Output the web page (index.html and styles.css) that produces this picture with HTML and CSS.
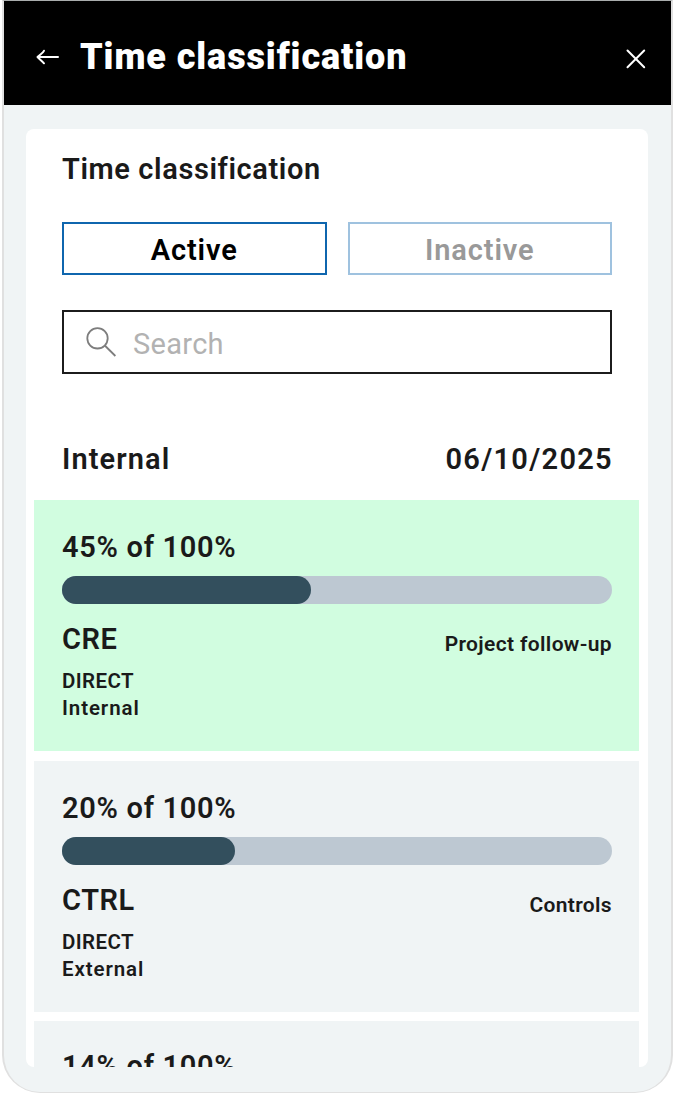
FILE: index.html
```html
<!DOCTYPE html>
<html lang="en">
<head>
    <meta charset="UTF-8">
    <meta name="viewport" content="width=device-width, initial-scale=1.0">
    <title>Time classification</title>
    <link rel="stylesheet" href="styles.css">
</head>
<body>
    <div class="phone">
        <!-- Header -->
        <header class="topbar">
            <svg class="back-icon" width="24" height="18" viewBox="0 0 24 18" fill="none" stroke="#fff" stroke-width="2" stroke-linecap="round" stroke-linejoin="round">
                <path d="M22 9H1.5M8 2.7C7.5 4.5 4 6.5 1.5 9C4 11.5 6 13 8 15.3"/>
            </svg>
            <h1>Time classification</h1>
            <svg class="close-icon" width="20" height="20" viewBox="0 0 20 20" fill="none" stroke="#fff" stroke-width="2" stroke-linecap="round">
                <path d="M1.5 1.5L18.2 18.2M18.2 1.5L1.5 18.2"/>
            </svg>
        </header>

        <main class="card">
            <h2>Time classification</h2>

            <div class="tabs">
                <button class="tab">Active</button>
                <button class="tab inactive">Inactive</button>
            </div>

            <div class="search">
                <svg width="32" height="32" viewBox="0 0 32 32" fill="none" stroke="#7d7d7d" stroke-width="1.8">
                    <circle cx="11.5" cy="12.3" r="10.2"/>
                    <path d="M18.8 19.5L29.4 30"/>
                </svg>
                <span class="search-text">Search</span>
            </div>

            <div class="group">
                <span class="group-name">Internal</span>
                <span class="date">06/10/2025</span>
            </div>

            <!-- Time entries -->
            <div class="entries">
                <section class="entry selected">
                    <p class="percent">45% of 100%</p>
                    <div class="bar"><div class="fill" style="width: 45.2%"></div></div>
                    <div class="row">
                        <span class="code">CRE</span>
                        <span class="desc">Project follow-up</span>
                    </div>
                    <p class="type">DIRECT</p>
                    <p class="scope">Internal</p>
                </section>
                <section class="entry">
                    <p class="percent">20% of 100%</p>
                    <div class="bar"><div class="fill" style="width: 31.5%"></div></div>
                    <div class="row">
                        <span class="code">CTRL</span>
                        <span class="desc">Controls</span>
                    </div>
                    <p class="type">DIRECT</p>
                    <p class="scope">External</p>
                </section>
                <section class="entry last">
                    <p class="percent">14% of 100%</p>
                </section>
            </div>
        </main>
    </div>
</body>
</html>
```
FILE: styles.css
```css
* {
    box-sizing: border-box;
}
body {
    font-family: Roboto, sans-serif;
    background-color: white;
    margin: 0;
    color: #1a1a1a;
}
h1, h2, p {
    margin: 0;
}
.phone {
    width: 671px;
    height: 1093px;
    margin-left: 2px;
    border: 2px solid #e0e0e0;
    border-top: 1px solid #a9adad;
    border-bottom-width: 1px;
    border-radius: 0 0 38px 38px;
    background-color: #f0f4f5;
    overflow: hidden;
}
.topbar {
    display: flex;
    align-items: center;
    height: 104px;
    padding: 7px 25px 0 32px;
    background-color: black;
    color: white;
}
.topbar h1 {
    flex: 1;
    margin-left: 20px;
    font-size: 36px;
    line-height: 42px;
    font-weight: 900;
    letter-spacing: 0.9px;
}
.back-icon {
    margin-top: 1px;
}
.close-icon {
    margin-top: 5px;
}
.card {
    width: 622px;
    height: 938px;
    margin: 24px 0 0 22px;
    padding: 22px 9px 0 8px;
    border-radius: 8px;
    background-color: white;
    overflow: hidden;
}
.card h2, .tabs, .search, .group {
    margin-left: 28px;
    margin-right: 27px;
}
.card h2, .group, .percent, .code {
    font-size: 29px;
    line-height: 36px;
    font-weight: 600;
    letter-spacing: 0.6px;
}
.tabs {
    display: flex;
    gap: 21px;
    margin-top: 35px;
}
.tab {
    flex: 1;
    height: 53px;
    padding: 3px 0 0;
    border: 2px solid #0f66ae;
    background-color: white;
    color: black;
    font-family: inherit;
    font-size: 29px;
    line-height: 36px;
    font-weight: 600;
    letter-spacing: 0.9px;
}
.tab.inactive {
    border-color: #9fc2df;
    color: #999;
}
.search {
    display: flex;
    align-items: center;
    height: 64px;
    margin-top: 35px;
    padding-left: 22px;
    border: 2px solid #1c1c1c;
    color: #b2b2b2;
    font-size: 29px;
    line-height: 36px;
    letter-spacing: 0.3px;
}
.search-text {
    margin: 4px 0 0 15px;
}
.group {
    display: flex;
    justify-content: space-between;
    margin-top: 67px;
}
.group-name {
    letter-spacing: 1.1px;
}
.date {
    margin-right: -1px;
    letter-spacing: 1.3px;
}
.entries {
    display: flex;
    flex-direction: column;
    gap: 10px;
    margin-top: 23px;
}
.entry {
    height: 251px;
    padding: 29px 27px 0 28px;
    background-color: #f0f4f5;
    flex-shrink: 0;
}
.entry.selected {
    background-color: #d1fde0;
}
.entry.last {
    margin-top: -1px;
    padding-top: 27px;
}
.percent {
    letter-spacing: 0.7px;
}
.bar {
    height: 28px;
    margin-top: 11px;
    border-radius: 14px;
    background-color: #bdc8d2;
}
.fill {
    height: 100%;
    border-radius: 14px;
    background-color: #334f5d;
}
.row {
    display: flex;
    justify-content: space-between;
    margin-top: 17px;
}
.desc {
    margin-top: 10px;
    font-size: 21px;
    line-height: 26px;
    font-weight: 600;
    letter-spacing: 0.35px;
}
.type, .scope {
    font-size: 20.5px;
    line-height: 26.5px;
    font-weight: 600;
}
.type {
    margin-top: 11px;
    letter-spacing: 0.4px;
}
.scope {
    letter-spacing: 0.9px;
}
```
